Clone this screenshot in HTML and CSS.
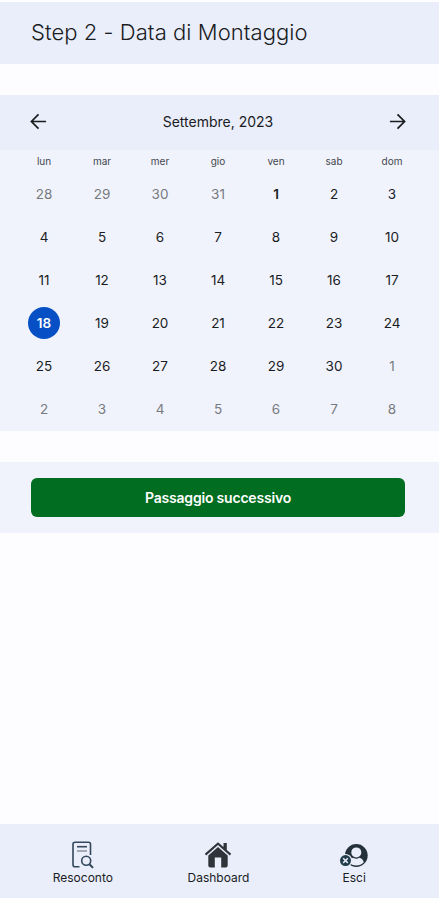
FILE: index.html
```html
<!DOCTYPE html>
<html lang="it">
<head>
<meta charset="utf-8">
<title>Data di Montaggio</title>
<link rel="stylesheet" href="styles.css">
</head>
<body>
<header class="title-bar"><h1>Step 2 - Data di Montaggio</h1></header>
<main>
  <section class="calendar">
    <div class="month-bar">
      <svg class="arrow" viewBox="0 0 18 18"><path d="M17 9H2M9 1.5 1.5 9 9 16.5"/></svg>
      <span class="month">Settembre, 2023</span>
      <svg class="arrow" viewBox="0 0 18 18"><path d="M1 9h15M9 1.5 16.5 9 9 16.5"/></svg>
    </div>
    <div class="weekdays"><span>lun</span><span>mar</span><span>mer</span><span>gio</span><span>ven</span><span>sab</span><span>dom</span></div>
    <div class="days">
      <span class="out">28</span><span class="out">29</span><span class="out">30</span><span class="out">31</span><span class="today">1</span><span>2</span><span>3</span>
      <span>4</span><span>5</span><span>6</span><span>7</span><span>8</span><span>9</span><span>10</span>
      <span>11</span><span>12</span><span>13</span><span>14</span><span>15</span><span>16</span><span>17</span>
      <span><b class="selected">18</b></span><span>19</span><span>20</span><span>21</span><span>22</span><span>23</span><span>24</span>
      <span>25</span><span>26</span><span>27</span><span>28</span><span>29</span><span>30</span><span class="out">1</span>
      <span class="out">2</span><span class="out">3</span><span class="out">4</span><span class="out">5</span><span class="out">6</span><span class="out">7</span><span class="out">8</span>
    </div>
  </section>
  <section class="action"><button class="next">Passaggio successivo</button></section>
</main>
<nav class="tabs">
  <a class="tab">
    <svg class="icon" viewBox="0 0 28 28" fill="none" stroke="#34475c" stroke-width="1.6">
      <path d="M10.500 25.700H6a2 2 0 0 1-2-2V3.300a2 2 0 0 1 2-2h13.500a2 2 0 0 1 2 2V14"/>
      <path d="M8 5.700h10"/><path d="M8 10h10" stroke="#9299a5"/>
      <circle cx="17.200" cy="19.800" r="4.500"/><path d="m20.500 23.200 3.500 3.700" stroke-width="2"/>
    </svg>
    <span class="label">Resoconto</span>
  </a>
  <a class="tab">
    <svg class="icon" viewBox="0 0 28 28" fill="#30343a">
      <path d="M14 1.200.8 12.800l1.400 1.600L14 4l11.800 10.400 1.400-1.600-4.400-3.900V2h-3.300v4z"/>
      <path d="M14 6 4.300 14.500V24.500a2 2 0 0 0 2 2h4.500V16.500h6.400v10h4.500a2 2 0 0 0 2-2V14.500z"/>
    </svg>
    <span class="label">Dashboard</span>
  </a>
  <a class="tab">
    <svg class="icon" viewBox="0 0 28 28">
      <circle cx="16.300" cy="14.500" r="11.400" fill="#25313a"/>
      <circle cx="16.300" cy="11.400" r="5" fill="#eaeefa"/>
      <path d="M8.800 21.300c.8-2.800 2.500-4.200 4.500-4.500 2 1.300 4 1.300 6 0 2 .3 3.700 1.700 4.500 4.500-4 4.300-11 4.300-15 0z" fill="#eaeefa"/>
      <circle cx="5.500" cy="19.600" r="6.700" fill="#eaeefa"/>
      <circle cx="5.500" cy="19.600" r="5.500" fill="#203d49"/>
      <path d="m3.200 17.300 4.600 4.600m0-4.600-4.600 4.600" stroke="#eaeefa" stroke-width="1.500"/>
    </svg>
    <span class="label">Esci</span>
  </a>
</nav>
</body>
</html>
```
FILE: styles.css
```css
* { box-sizing: border-box; }
body {
  margin: 0;
  height: 900px;
  padding: 2px 0;
  display: flex;
  flex-direction: column;
  background: #fdfcff;
  color: #1a1c1f;
  font-family: Inter, sans-serif;
}
main { flex: 1; }
.title-bar {
  height: 62px;
  padding: 0 31px;
  display: flex;
  align-items: center;
  background: #eaeefa;
}
h1 {
  margin: 0 0 3px;
  font-size: 22px;
  line-height: 28px;
  font-weight: 300;
  letter-spacing: 0.06px;
  white-space: nowrap;
}
.calendar {
  margin-top: 31px;
  height: 336px;
  background: #f0f3fc;
}
.month-bar {
  height: 55px;
  padding: 0 33px 3px 30px;
  display: flex;
  align-items: center;
  justify-content: space-between;
  background: #eaeefa;
}
.month { font-size: 14px; }
.arrow {
  width: 17px;
  height: 17px;
  fill: none;
  stroke: #1a1c1f;
  stroke-width: 1.8;
}
.weekdays, .days {
  display: grid;
  grid-template-columns: repeat(7, 58px);
  padding-left: 15px;
  text-align: center;
}
.weekdays {
  height: 22px;
  font-size: 10px;
  line-height: 22px;
  color: #44474e;
}
.days { grid-auto-rows: 43px; font-size: 13.5px; }
.days span { display: grid; place-items: center; }
.days .out { color: #777a80; }
.days .today { font-weight: 600; }
.days .selected {
  width: 32px;
  height: 32px;
  border-radius: 50%;
  background: #064fc4;
  color: #fff;
  font-weight: 600;
  line-height: 32px;
  text-align: center;
}
.action {
  margin-top: 31px;
  height: 71px;
  padding: 16px 34px 0 31px;
  background: #f0f3fc;
}
.next {
  display: block;
  width: 100%;
  height: 39px;
  padding: 0;
  border: 0;
  border-radius: 6px;
  background: #006d20;
  color: #fff;
  font: 600 14px Inter, sans-serif;
  letter-spacing: -0.2px;
}
.tabs {
  height: 74px;
  padding: 0 17px 0 15px;
  display: grid;
  grid-template-columns: repeat(3, 1fr);
  background: #eaeefa;
}
.tab {
  display: flex;
  flex-direction: column;
  align-items: center;
  padding-top: 17px;
}
.icon { width: 28px; height: 28px; }
.label {
  margin-top: 1px;
  font-size: 12px;
  line-height: 16px;
  white-space: nowrap;
}
```
